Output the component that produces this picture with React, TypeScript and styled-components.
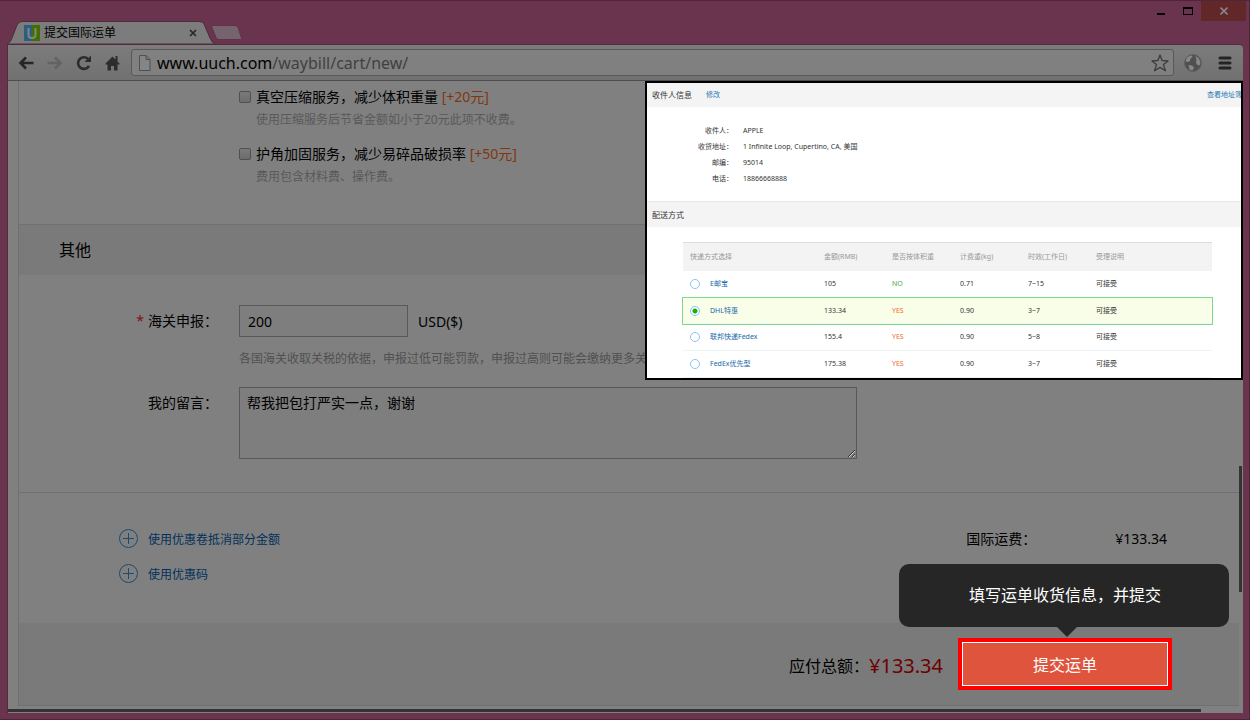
import React from "react";
import styled, { createGlobalStyle, css } from "styled-components";

const Global = createGlobalStyle`
  * { box-sizing: border-box; }
  html, body, #root { height: 100%; }
  body { margin: 0; background: #6a344f; }
  body, button, input, textarea { font-family: "Noto Sans", "Noto Sans CJK SC", sans-serif; }
  a { text-decoration: none; }
`;

const Frame = styled.div`
  position: relative;
  display: flex;
  flex-direction: column;
  min-height: 100%;
  padding: 0 6px 6px 7px;
  border: 1px solid #502439;
  border-width: 1px 1px 1px 0;
  background: #6a344f;
  overflow: hidden;
`;

const TitleBar = styled.header`
  display: flex;
  justify-content: space-between;
  height: 43px;
`;

const Tabs = styled.div`
  display: flex;
  align-items: flex-end;
`;

const Tab = styled.div`
  position: relative;
  display: flex;
  align-items: center;
  gap: 4px;
  width: 208px;
  height: 24px;
  padding: 2px 18px 0 17px;
  font-size: 12px;
  line-height: 20px;
  color: #000;
`;

const TabShape = styled.svg`
  position: absolute;
  left: 0;
  top: 0;
`;

const TabText = styled.span`
  position: relative;
  flex: 1;
`;

const Favicon = styled.svg`
  position: relative;
`;

const IconButton = styled.button`
  position: relative;
  display: flex;
  align-items: center;
  justify-content: center;
  padding: 0;
  border: 0;
  background: none;
  cursor: pointer;
`;

const NewTab = styled(IconButton)`
  align-self: flex-end;
  margin: 0 0 4px -4px;
`;

const WindowButtons = styled.div`
  display: flex;
  align-items: flex-start;
  margin-right: -3px;
`;

const WindowButton = styled(IconButton)<{ $close?: boolean }>`
  width: ${(p) => (p.$close ? 45 : 27)}px;
  height: 20px;
  background: ${(p) => (p.$close ? "#622829" : "none")};
`;

const Toolbar = styled.nav`
  display: flex;
  align-items: center;
  height: 37px;
  padding: 0 11px 0 3px;
  border: 1px solid #542a40;
  border-width: 1px 0 0 1px;
  border-bottom: 1px solid #4e4e4e;
  border-radius: 0 4px 0 0;
  background: linear-gradient(#7c7c7c, #717171);
`;

const ToolButton = styled(IconButton)`
  width: 29px;
  height: 26px;
`;

const AddressBox = styled.div`
  display: flex;
  flex: 1;
  align-items: center;
  gap: 6px;
  height: 27px;
  margin: 0 10px 0 4px;
  padding: 0 4px 0 6px;
  border: 1px solid #595959;
  border-radius: 3px;
  background: #808080;
`;

const Url = styled.span`
  flex: 1;
  font-size: 16px;
  line-height: 24px;
  color: #404040;
  b { font-weight: 400; color: #000; }
`;

const MenuButton = styled(IconButton)`
  margin-left: 16px;
`;

const Viewport = styled.main`
  position: relative;
  flex: 1;
  display: flex;
  flex-direction: column;
  padding: 0 4px 7px 10px;
  border-left: 1px solid #542a40;
  background: #808080;
`;

const Page = styled.form`
  flex: 1;
  display: flex;
  flex-direction: column;
  margin: 0;
  border: 1px solid #6f7074;
  border-width: 0 0 1px 1px;
  color: #000;
  font-size: 14px;
`;

const Services = styled.section`
  display: flex;
  flex-direction: column;
  gap: 11px;
  padding: 4px 0 36px 220px;
`;

const Service = styled.div`
  display: grid;
  grid-template-columns: 12px 1fr;
  column-gap: 5px;
`;

const ServiceLabel = styled.label`
  line-height: 24px;
`;

const Extra = styled.span`
  color: #80370f;
`;

const Hint = styled.p`
  margin: 0;
  grid-column: 2;
  font-size: 12px;
  line-height: 22px;
  color: #595959;
`;

const Check = styled.input`
  appearance: none;
  align-self: center;
  width: 12px;
  height: 12px;
  margin: 0;
  border: 1px solid #505050;
  border-radius: 2px;
  background: linear-gradient(#7a7a7a, #6c6c6c);
`;

const SectionTitle = styled.h2`
  margin: 0;
  padding-left: 40px;
  border-top: 1px solid #6e7073;
  background: #7a7a7a;
  font-size: 16px;
  font-weight: 400;
  line-height: 50px;
`;

const Fields = styled.section`
  display: grid;
  grid-template-columns: 199px minmax(0, 618px);
  column-gap: 21px;
  padding: 30px 0 33px;
`;

const FieldLabel = styled.label`
  text-align: right;
  line-height: 32px;
`;

const Required = styled.span`
  margin-right: 4px;
  color: #7c1414;
`;

const InputLine = styled.div`
  display: flex;
  align-items: center;
  gap: 10px;
`;

const boxed = css`
  border: 1px solid #595959;
  border-radius: 0;
  background: #7e7e7e;
  color: #000;
  font-size: 14px;
  outline: 0;
`;

const Amount = styled.input`
  ${boxed}
  width: 169px;
  height: 32px;
  padding: 0 8px;
`;

const FieldHint = styled(Hint)`
  margin: 11px 0 17px;
  color: #505050;
  white-space: nowrap;
`;

const Message = styled.textarea`
  ${boxed}
  display: block;
  width: 100%;
  height: 72px;
  padding: 5px 7px;
  line-height: 20px;
`;

const Summary = styled.section`
  display: flex;
  justify-content: space-between;
  padding: 28px 72px 32px 100px;
  border-top: 1px solid #6e7073;
`;

const Coupons = styled.div`
  display: flex;
  flex-direction: column;
`;

const Coupon = styled.a`
  display: flex;
  align-items: center;
  gap: 10px;
  height: 35px;
  font-size: 12px;
  color: #00305a;
`;

const Freight = styled.div`
  display: flex;
  gap: 79px;
  line-height: 35px;
`;

const Checkout = styled.footer`
  flex: 1;
  display: flex;
  align-items: center;
  justify-content: flex-end;
  min-height: 82px;
  padding-right: 67px;
  background: #7a7a7a;
`;

const Total = styled.p`
  display: flex;
  align-items: center;
  margin: 2px 15px 0 0;
  font-size: 16px;
`;

const TotalPrice = styled.strong`
  font-size: 20px;
  font-weight: 400;
  color: #6e0000;
`;

const SubmitSpot = styled.div`
  position: relative;
  border: 4px solid #f00;
`;

const Submit = styled.button`
  display: block;
  width: 206px;
  height: 44px;
  padding: 0;
  border: 1px solid #fff;
  border-radius: 0;
  background: #df543c;
  color: #fff;
  font-size: 16px;
  cursor: pointer;
`;

const Tip = styled.div`
  position: absolute;
  right: -61px;
  bottom: 59px;
  width: 330px;
  padding-left: 2px;
  border-radius: 10px;
  background: #262626;
  color: #fff;
  font-size: 16px;
  line-height: 63px;
  text-align: center;
  &::after {
    content: "";
    position: absolute;
    left: 158px;
    top: 63px;
    border: 10px solid transparent;
    border-top-color: #262626;
    border-bottom-width: 0;
  }
`;

const ScrollThumb = styled.div<{ $vertical?: boolean }>`
  position: absolute;
  background: #333;
  ${(p) =>
    p.$vertical
      ? "right: 1px; bottom: 121px; width: 3px; height: 126px;"
      : "left: 0; right: 42px; bottom: 1px; height: 3px;"}
`;

const Inset = styled.aside`
  position: absolute;
  top: 0;
  right: 0;
  width: 598px;
  height: 299px;
  border: 2px solid #000;
  background: #fff;
  color: #333;
  font-size: 7px;
  line-height: 16px;
  overflow: hidden;
`;

const InsetHead = styled.div<{ $h: number }>`
  display: flex;
  align-items: center;
  gap: 14px;
  height: ${(p) => p.$h}px;
  padding-left: 5px;
  background: #f4f4f4;
  white-space: nowrap;
`;

const InsetLink = styled.a<{ $end?: boolean }>`
  color: #2a78b4;
  ${(p) => p.$end && "margin: 0 -1px 0 auto;"}
`;

const InsetTitle = styled.h3`
  margin: 0;
  font-size: 8px;
  font-weight: 400;
`;

const Recipient = styled.dl`
  display: grid;
  grid-template-columns: 86px 1fr;
  column-gap: 10px;
  margin: 0;
  padding: 16px 0 14px;
  border-bottom: 1px solid #e8e8e8;
  dt { text-align: right; }
  dd { margin: 0; }
`;

const Methods = styled.table`
  width: 529px;
  margin: 15px 0 0 36px;
  border-collapse: collapse;
  table-layout: fixed;
  th {
    height: 28px;
    width: 68px;
    padding: 1px 0 0;
    border-top: 1px solid #ddd;
    background: #f3f3f3;
    color: #999;
    font-weight: 400;
    text-align: left;
  }
  th:first-child { padding-left: 7px; width: 141px; }
  th:last-child { width: auto; }
  td { padding: 0; }
  td:first-child { padding-left: 7px; }
`;

const MethodRow = styled.tr<{ $active?: boolean }>`
  height: ${(p) => (p.$active ? 26 : 27)}px;
  border-bottom: 1px solid #eef5f5;
  ${(p) => p.$active && "background: #f9fee9; outline: 1px solid #7fd98c;"}
`;

const MethodLabel = styled.label`
  display: flex;
  align-items: center;
  gap: 10px;
  color: #2068a8;
`;

const Radio = styled.input`
  appearance: none;
  width: 10px;
  height: 10px;
  margin: 0;
  border: 1px solid #8cc4ee;
  border-radius: 50%;
  background: #fff;
  &:checked { background: radial-gradient(circle, #14b014 2px, #fff 3px); }
`;

const Flag = styled.td<{ $yes: boolean }>`
  color: ${(p) => (p.$yes ? "#f26b2c" : "#4aa84e")};
`;

const methods = [
  ["E邮宝", "105", "NO", "0.71", "7~15"],
  ["DHL特惠", "133.34", "YES", "0.90", "3~7"],
  ["联邦快递Fedex", "155.4", "YES", "0.90", "5~8"],
  ["FedEx优先型", "175.38", "YES", "0.90", "3~7"],
];

const PlusIcon = () => (
  <svg width="19" height="19" viewBox="0 0 19 19" fill="none" stroke="#1c4a70">
    <circle cx="9.5" cy="9.5" r="9" />
    <path d="M4 9.5h11M9.5 4v11" />
  </svg>
);

const services = [
  { id: "vacuum", name: "真空压缩服务，减少体积重量", fee: "[+20元]", note: "使用压缩服务后节省金额如小于20元此项不收费。" },
  { id: "corner", name: "护角加固服务，减少易碎品破损率", fee: "[+50元]", note: "费用包含材料费、操作费。" },
];

export default function App() {
  return (
    <>
      <Global />
      <Frame>
        <TitleBar>
          <Tabs>
            <Tab>
              <TabShape width="208" height="24" viewBox="0 0 208 24">
                <path d="M0 24C4 22 4 20 5 18L10 5Q12 1.500 15 1.500H192Q196 1.500 197 4L203 18Q205 23 208 24Z" fill="#7c7c7c" stroke="#502a3d" />
              </TabShape>
              <Favicon width="16" height="16" viewBox="0 0 16 16">
                <path d="M0 0h8v16H0z" fill="#2a5f7e" />
                <path d="M8 0h8v16H8z" fill="#426f00" />
                <path d="M4.500 3v6.500q0 3.500 3.500 3.500t3.500-3.500V3" fill="none" stroke="#858585" strokeWidth="2" />
              </Favicon>
              <TabText>提交国际运单</TabText>
              <IconButton type="button" aria-label="关闭标签页">
                <svg width="8" height="8" viewBox="0 0 8 8" stroke="#262626" strokeWidth="1.700">
                  <path d="M1 1l6 6M7 1L1 7" />
                </svg>
              </IconButton>
            </Tab>
            <NewTab type="button" aria-label="打开新的标签页">
              <svg width="31" height="15" viewBox="0 0 31 15">
                <path d="M1.500.5H24q2 0 3 2l3.500 10.500q.5 1.500-1 1.500H8q-2 0-3-2L.8 2Q.5.500 1.500.5Z" fill="#75646e" stroke="#5f3449" />
              </svg>
            </NewTab>
          </Tabs>
          <WindowButtons>
            <WindowButton type="button" aria-label="最小化">
              <svg width="8" height="8"><path d="M0 6h8v2H0z" fill="#000" /></svg>
            </WindowButton>
            <WindowButton type="button" aria-label="最大化">
              <svg width="10" height="8"><path d="M.5 0v8M9.500 0v8M0 7.500h10" stroke="#000" fill="none" /><path d="M0 0h10v2H0z" /></svg>
            </WindowButton>
            <WindowButton type="button" $close aria-label="关闭">
              <svg width="8" height="8" viewBox="0 0 8 8" stroke="#868686" strokeWidth="1.600"><path d="M.5.5l7 7M7.500.5l-7 7" /></svg>
            </WindowButton>
          </WindowButtons>
        </TitleBar>

        <Toolbar>
          <ToolButton type="button" aria-label="后退">
            <svg width="16" height="14" viewBox="0 0 16 14" fill="none" stroke="#262626" strokeWidth="2.600"><path d="M15.500 7H3M8 1.500L2.500 7L8 12.500" /></svg>
          </ToolButton>
          <ToolButton type="button" aria-label="前进">
            <svg width="16" height="14" viewBox="0 0 16 14" fill="none" stroke="#636363" strokeWidth="2.600"><path d="M.5 7H13M8 1.500L13.500 7L8 12.500" /></svg>
          </ToolButton>
          <ToolButton type="button" aria-label="重新加载">
            <svg width="16" height="16" viewBox="0 0 16 16"><path d="M13 10.800A5.800 5.800 0 1 1 12 4" fill="none" stroke="#2c2c2c" strokeWidth="2.600" /><path d="M15 .5V7H8.500z" fill="#2c2c2c" /></svg>
          </ToolButton>
          <ToolButton type="button" aria-label="主页">
            <svg width="15" height="16" viewBox="0 0 15 16" fill="#2c2c2c"><path d="M7.500 1.500L.5 8.500v1H2.500v6H6V11h3v4.500h3.500v-6h2v-1L12.500 6.500V1h-2v3.500z" /></svg>
          </ToolButton>
          <AddressBox>
            <svg width="13" height="16" viewBox="0 0 13 16" fill="#858585" stroke="#505050"><path d="M1.500.5h6.500l4 4v11H1.500zM8 .5v4h4" /></svg>
            <Url><b>www.uuch.com</b>/waybill/cart/new/</Url>
            <IconButton type="button" aria-label="收藏">
              <svg width="18" height="18" viewBox="0 0 18 18" fill="none" stroke="#3c3c3c" strokeWidth="1.300" strokeLinejoin="round"><path d="M9 1l2.100 5.500 5.900.4-4.500 3.700 1.900 6.200L9 13.400l-5.400 3.400 1.900-6.200L1 6.900l5.900-.4z" /></svg>
            </IconButton>
          </AddressBox>
          <IconButton type="button" aria-label="网络">
            <svg width="18" height="18" viewBox="0 0 18 18">
              <circle cx="9" cy="9" r="8.500" fill="#505050" stroke="#626262" />
              <path d="M2.500 4.500Q4.500 1.500 8 1.500L8.500 3 6.500 4.500 6 7 4 8 1.500 7.500zM11 2l3.500 2 2 4-.5 3-2 .5-2-2.500.5-3.500zM4.500 11l3.500 .5 2 2-1.500 3-3-1z" fill="#888" />
            </svg>
          </IconButton>
          <MenuButton type="button" aria-label="菜单">
            <svg width="14" height="14" viewBox="0 0 14 14" stroke="#242424" strokeWidth="3" strokeLinecap="round"><path d="M2 2h10M2 7h10M2 12h10" /></svg>
          </MenuButton>
        </Toolbar>

        <Viewport>
          <Page onSubmit={(e) => e.preventDefault()}>
            <Services>
              {services.map((s) => (
                <Service key={s.id}>
                  <Check type="checkbox" id={s.id} />
                  <ServiceLabel htmlFor={s.id}>
                    {s.name} <Extra>{s.fee}</Extra>
                  </ServiceLabel>
                  <Hint>{s.note}</Hint>
                </Service>
              ))}
            </Services>

            <SectionTitle>其他</SectionTitle>
            <Fields>
              <FieldLabel htmlFor="declare"><Required>*</Required>海关申报：</FieldLabel>
              <div>
                <InputLine>
                  <Amount id="declare" type="text" defaultValue="200" />
                  <span>USD($)</span>
                </InputLine>
                <FieldHint>各国海关收取关税的依据，申报过低可能罚款，申报过高则可能会缴纳更多关税</FieldHint>
              </div>
              <FieldLabel htmlFor="message">我的留言：</FieldLabel>
              <Message id="message" defaultValue="帮我把包打严实一点，谢谢" />
            </Fields>

            <Summary>
              <Coupons>
                <Coupon href="#voucher"><PlusIcon />使用优惠卷抵消部分金额</Coupon>
                <Coupon href="#code"><PlusIcon />使用优惠码</Coupon>
              </Coupons>
              <Freight>
                <span>国际运费：</span>
                <span>¥133.34</span>
              </Freight>
            </Summary>

            <Checkout>
              <Total>应付总额：<TotalPrice>¥133.34</TotalPrice></Total>
              <SubmitSpot>
                <Submit type="submit">提交运单</Submit>
                <Tip role="tooltip">填写运单收货信息，并提交</Tip>
              </SubmitSpot>
            </Checkout>
          </Page>

          <ScrollThumb $vertical />
          <ScrollThumb />

          <Inset>
            <InsetHead $h={24}>
              <InsetTitle>收件人信息</InsetTitle>
              <InsetLink href="#edit">修改</InsetLink>
              <InsetLink href="#book" $end>查看地址簿</InsetLink>
            </InsetHead>
            <Recipient>
              <dt>收件人：</dt><dd>APPLE</dd>
              <dt>收货地址：</dt><dd>1 Infinite Loop, Cupertino, CA, 美国</dd>
              <dt>邮编：</dt><dd>95014</dd>
              <dt>电话：</dt><dd>18866668888</dd>
            </Recipient>
            <InsetHead $h={25}>
              <InsetTitle>配送方式</InsetTitle>
            </InsetHead>
            <Methods>
              <thead>
                <tr>
                  <th>快递方式选择</th>
                  <th>金额(RMB)</th>
                  <th>是否按体积重</th>
                  <th>计费重(kg)</th>
                  <th>时效(工作日)</th>
                  <th>受理说明</th>
                </tr>
              </thead>
              <tbody>
                {methods.map(([name, price, flag, weight, days], i) => (
                  <MethodRow key={name} $active={i === 1}>
                    <td>
                      <MethodLabel>
                        <Radio type="radio" name="method" defaultChecked={i === 1} />
                        {name}
                      </MethodLabel>
                    </td>
                    <td>{price}</td>
                    <Flag $yes={flag === "YES"}>{flag}</Flag>
                    <td>{weight}</td>
                    <td>{days}</td>
                    <td>可接受</td>
                  </MethodRow>
                ))}
              </tbody>
            </Methods>
          </Inset>
        </Viewport>
      </Frame>
    </>
  );
}
